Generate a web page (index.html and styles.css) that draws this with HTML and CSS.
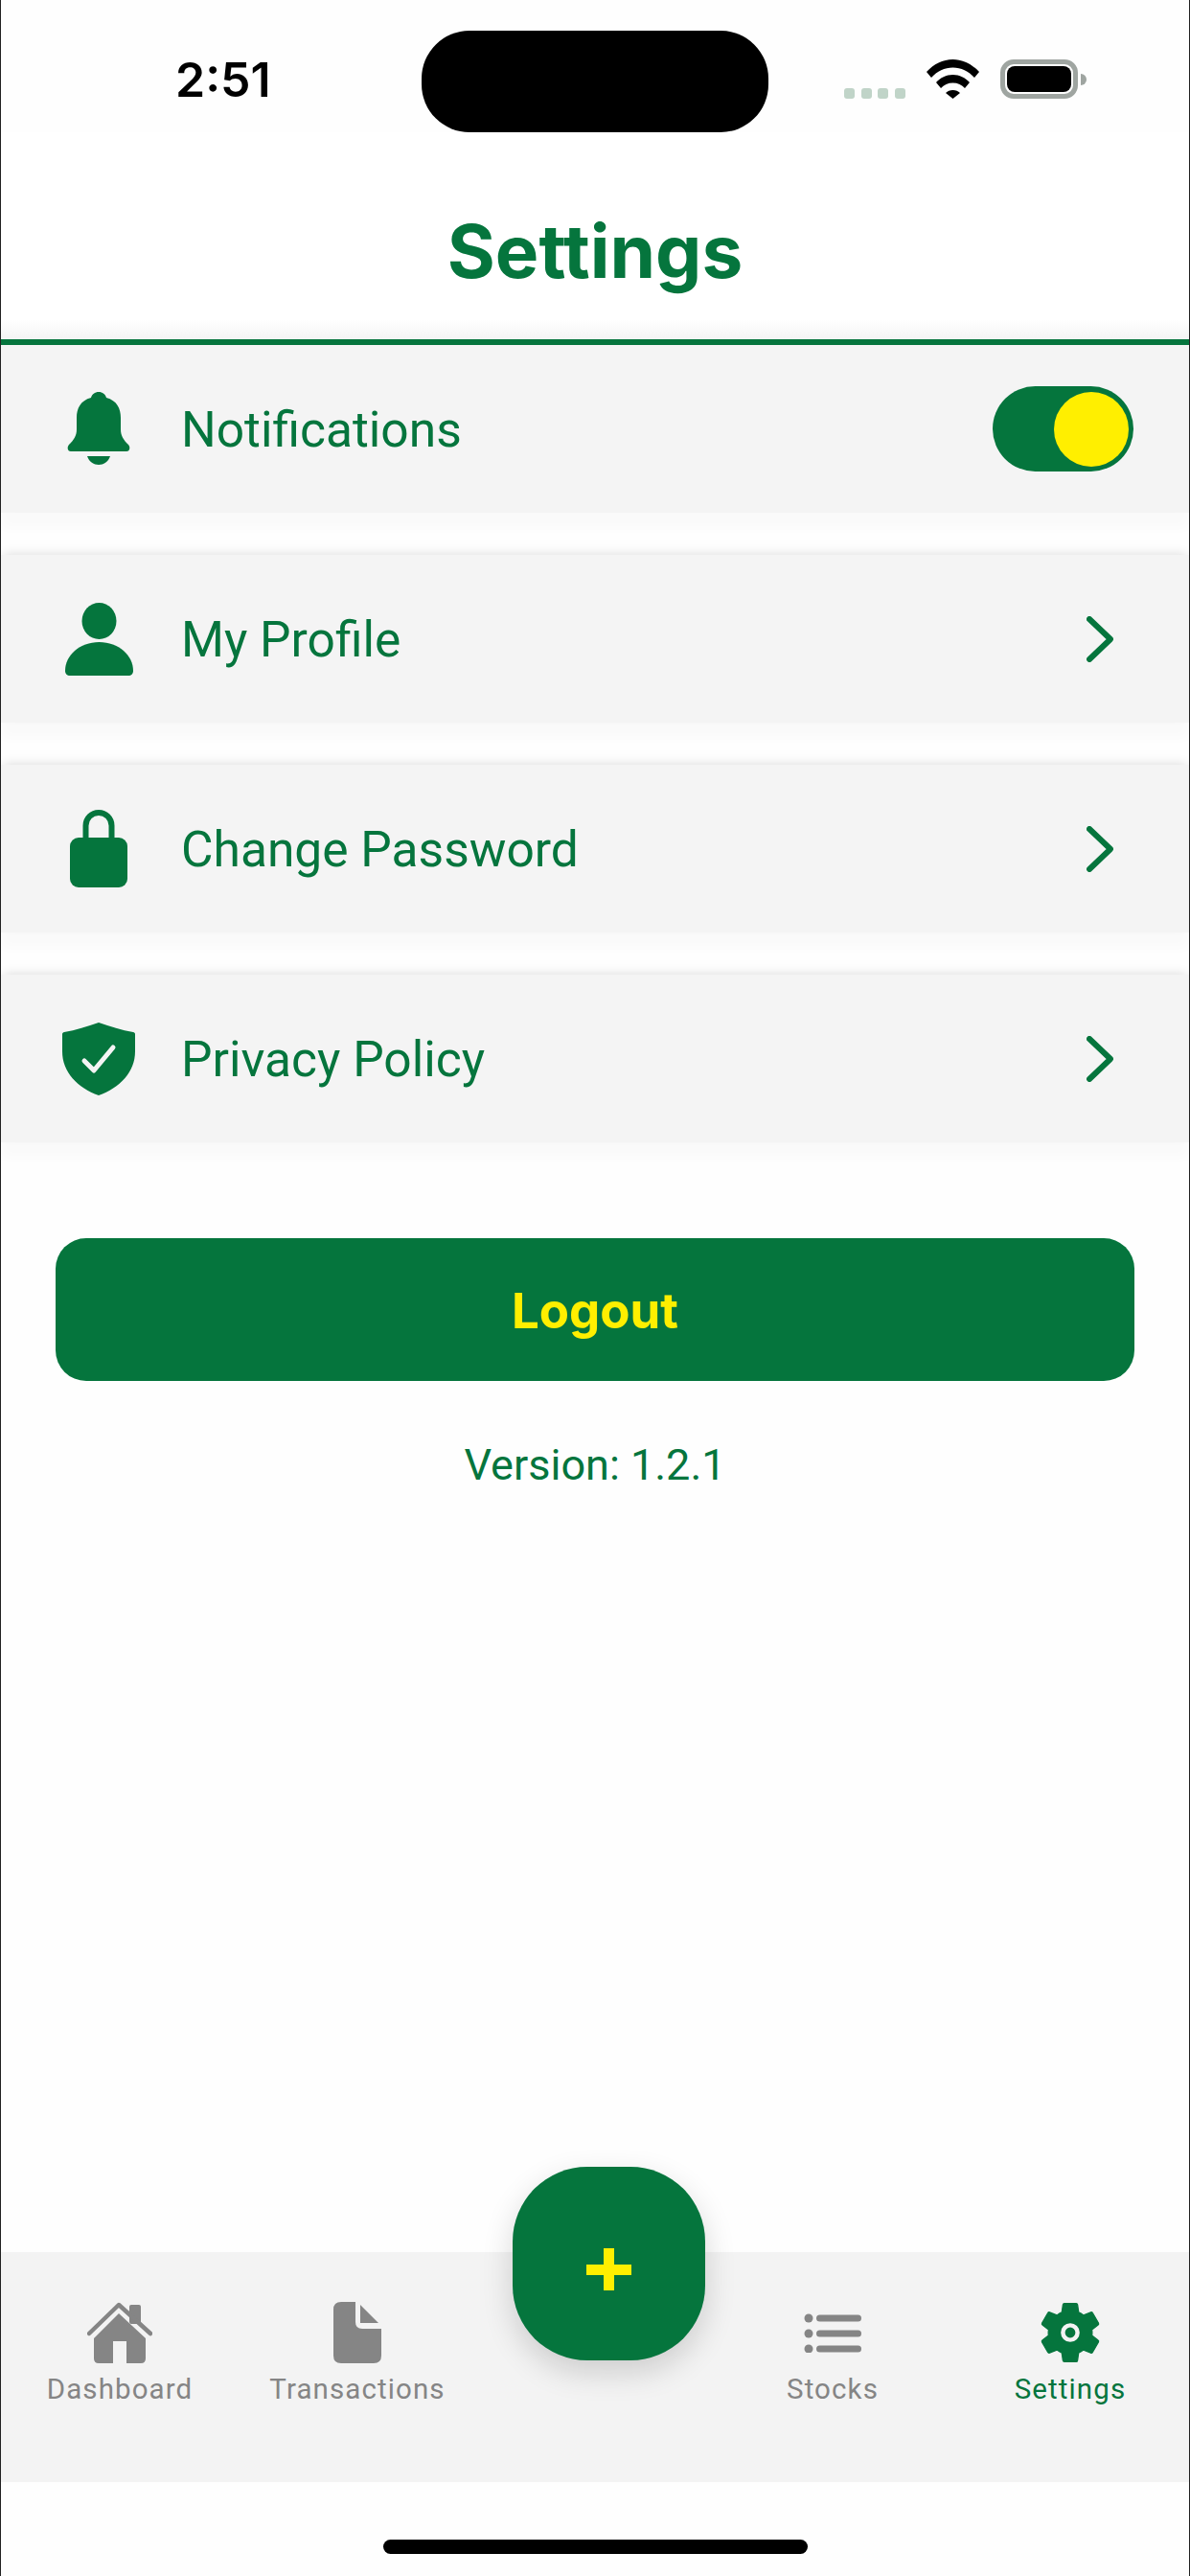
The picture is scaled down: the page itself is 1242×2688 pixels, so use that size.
FILE: index.html
```html
<!DOCTYPE html>
<html lang="en">
<head>
  <meta charset="UTF-8" />
  <meta name="viewport" content="width=device-width, initial-scale=1.0" />
  <title>Settings</title>
  <link rel="stylesheet" href="styles.css">
</head>
<body>
  <div class="phone">
    <div class="status-bar">
      <span class="time">2:51</span>
      <div class="island"></div>
      <div class="status-icons">
        <div class="signal"><i></i><i></i><i></i><i></i></div>
        <svg class="wifi" width="55" height="41" viewBox="0 0 55 41">
          <path d="M0 13C7.5 5 17 0 27.5 0S47.5 5 55 13L50 19C44 12.5 36 8.5 27.5 8.5S11 12.5 5 19z"/>
          <path d="M10 24C14.5 19 20.5 16 27.5 16S40.5 19 45 24L40 30C37 26.5 32.5 24.5 27.5 24.5S18 26.5 15 30z"/>
          <path d="M20 35C22 33 24.5 32 27.5 32S33 33 35 35L27.5 41z"/>
        </svg>
        <div class="battery"><div class="battery-level"></div></div>
        <div class="battery-cap"></div>
      </div>
    </div>

    <header class="page-header">
      <h1>Settings</h1>
    </header>

    <main class="main">
      <ul class="settings-list">
        <li class="settings-row">
          <span class="row-icon">
            <svg width="66" height="77" viewBox="0 0 66 77">
              <path d="M33 0c-4 0-7 2.500-8 6C14 9 10 17 10 27v12c0 7-3 11-8 16-2 2-2 7 2 7h58c4 0 4-5 2-7-5-5-8-9-8-16V27C56 17 52 9 41 6 40 2.500 37 0 33 0z"/>
              <path d="M21 67h24c-2 6-7 9-12 9s-10-3-12-9z"/>
            </svg>
          </span>
          <span class="row-label">Notifications</span>
          <span class="toggle"><span class="toggle-knob"></span></span>
        </li>
        <li class="settings-row">
          <span class="row-icon">
            <svg width="71" height="76" viewBox="0 0 71 76">
              <ellipse cx="35.500" cy="19" rx="18" ry="19"/>
              <path d="M0 71C0 55 15 41 35.500 41S71 55 71 71c0 3-2 5-5 5H5c-3 0-5-2-5-5z"/>
            </svg>
          </span>
          <span class="row-label">My Profile</span>
          <svg class="chevron" width="28" height="48" viewBox="0 0 28 48"><path d="M3 3L25 24 3 45"/></svg>
        </li>
        <li class="settings-row">
          <span class="row-icon">
            <svg width="60" height="81" viewBox="0 0 60 81">
              <path class="shackle" d="M16.500 32V16.500a13.500 13.500 0 0 1 27 0V32"/>
              <rect y="29" width="60" height="52" rx="9"/>
            </svg>
          </span>
          <span class="row-label">Change Password</span>
          <svg class="chevron" width="28" height="48" viewBox="0 0 28 48"><path d="M3 3L25 24 3 45"/></svg>
        </li>
        <li class="settings-row">
          <span class="row-icon">
            <svg width="76" height="76" viewBox="0 0 76 76">
              <path d="M38 0c12 4 24 8 36 10 1 0 2 1 2 2v18c0 22-16 38-38 46C16 68 0 52 0 30V12c0-1 1-2 2-2C14 8 26 4 38 0z"/>
              <path class="check" d="M23 40L33 50 53 26"/>
            </svg>
          </span>
          <span class="row-label">Privacy Policy</span>
          <svg class="chevron" width="28" height="48" viewBox="0 0 28 48"><path d="M3 3L25 24 3 45"/></svg>
        </li>
      </ul>

      <button class="logout-btn">Logout</button>
      <p class="version">Version: 1.2.1</p>
    </main>

    <nav class="tab-bar">
      <a class="tab" href="#">
        <span class="tab-icon">
          <svg width="68" height="64" viewBox="0 0 68 64">
            <rect x="44" y="3" width="12" height="20" rx="2"/>
            <path class="roof" d="M2 33L33 3 66 33"/>
            <path d="M33 12L61 38V59q0 5-5 5H41V41H27V64H12q-5 0-5-5V38z"/>
          </svg>
        </span>
        Dashboard
      </a>
      <a class="tab" href="#">
        <span class="tab-icon">
          <svg width="50" height="64" viewBox="0 0 50 64">
            <path d="M8 0H23V21q0 7 7 7H50V56q0 8-8 8H8q-8 0-8-8V8q0-8 8-8z"/>
            <path d="M28 3L47 22H28z"/>
          </svg>
        </span>
        Transactions
      </a>
      <div class="tab-spacer"></div>
      <a class="tab" href="#">
        <span class="tab-icon">
          <svg width="60" height="41" viewBox="0 0 60 41">
            <ellipse cx="5" cy="5" rx="4.500" ry="4.500"/>
            <ellipse cx="5" cy="21" rx="4.500" ry="4.500"/>
            <ellipse cx="5" cy="37" rx="4.500" ry="4.500"/>
            <rect x="13" y="1.500" width="47" height="7" rx="3.500"/>
            <rect x="13" y="17.500" width="47" height="7" rx="3.500"/>
            <rect x="13" y="33.500" width="47" height="7" rx="3.500"/>
          </svg>
        </span>
        Stocks
      </a>
      <a class="tab active" href="#">
        <span class="tab-icon">
          <svg width="64" height="66" viewBox="2.300 1.600 19.400 20.800">
            <path class="gear" d="M19.140 12.940c.04-.3.06-.61.06-.94 0-.32-.02-.64-.07-.94l2.030-1.580c.18-.14.23-.41.12-.61l-1.920-3.320c-.12-.22-.37-.29-.59-.22l-2.390.96c-.5-.38-1.030-.7-1.620-.94l-.36-2.540c-.04-.24-.24-.41-.48-.41h-3.840c-.24 0-.43.17-.47.41l-.36 2.540c-.59.24-1.130.57-1.620.94l-2.390-.96c-.22-.08-.47 0-.59.22L2.740 8.870c-.12.21-.08.47.12.61l2.030 1.580c-.05.3-.09.63-.09.94s.02.64.07.94l-2.030 1.580c-.18.14-.23.41-.12.61l1.920 3.320c.12.22.37.29.59.22l2.390-.96c.5.38 1.030.7 1.620.94l.36 2.540c.05.24.24.41.48.41h3.840c.24 0 .44-.17.47-.41l.36-2.540c.59-.24 1.130-.56 1.620-.94l2.390.96c.22.08.47 0 .59-.22l1.920-3.320c.12-.22.07-.47-.12-.61l-2.010-1.580z"/>
            <circle class="gear-hole" cx="12" cy="12" r="2.400"/>
          </svg>
        </span>
        Settings
      </a>
    </nav>

    <div class="home-area"><div class="home-indicator"></div></div>

    <button class="fab">
      <svg width="47" height="44" viewBox="0 0 47 44">
        <rect x="18" width="11" height="44"/>
        <rect y="17" width="47" height="11"/>
      </svg>
    </button>
  </div>
</body>
</html>
```

FILE: styles.css
```css
* {
  margin: 0;
  padding: 0;
  box-sizing: border-box;
}

html, body {
  background: #fefefe;
}

.phone {
  position: relative;
  display: flex;
  flex-direction: column;
  width: 1242px;
  height: 2688px;
  overflow: hidden;
  border-left: 1px solid #222;
  border-right: 1px solid #222;
  font-family: Roboto, "Liberation Sans", sans-serif;
  color: #05753d;
}

/* status bar */
.status-bar {
  display: grid;
  grid-template-columns: 439px 362px 1fr;
  height: 138px;
  padding-top: 32px;
}

.time {
  padding-left: 182px;
  padding-top: 21px;
  font-family: Inter, "Liberation Sans", sans-serif;
  font-size: 50px;
  line-height: 60px;
  font-weight: 600;
  color: #000;
}

.island {
  height: 106px;
  background: #000;
  border-radius: 50px;
}

.status-icons {
  display: flex;
  align-items: flex-end;
  height: 71px;
  padding-left: 79px;
}

.signal {
  display: flex;
  gap: 6.5px;
  margin-right: 22px;
}

.signal i {
  width: 11px;
  height: 11px;
  border-radius: 3px;
  background: #c0d4c8;
}

.wifi {
  margin-right: 22px;
  fill: #000;
}

.battery {
  width: 81px;
  height: 41px;
  padding: 2px;
  border: 5px solid #9fa5a1;
  border-radius: 14px;
}

.battery-level {
  height: 100%;
  background: #000;
  border-radius: 8px;
}

.battery-cap {
  width: 6px;
  height: 12px;
  margin: 0 0 14px 3px;
  background: #9fa5a1;
  border-radius: 0 6px 6px 0;
}

/* header */
.page-header {
  height: 222px;
  padding-top: 82px;
  text-align: center;
  border-bottom: 6px solid #05753d;
  background: linear-gradient(to bottom, #fff calc(100% - 20px), #f4f4f4 100%);
}

.page-header h1 {
  font-family: Inter, "Liberation Sans", sans-serif;
  font-size: 76.5px;
  line-height: 84px;
  font-weight: 700;
}

/* settings rows */
.main {
  flex: 1;
  display: flex;
  flex-direction: column;
  align-items: center;
}

.settings-list {
  list-style: none;
  width: 100%;
  display: flex;
  flex-direction: column;
  gap: 44px;
}

.settings-row {
  display: flex;
  align-items: center;
  height: 175px;
  padding: 0 58px 0 62px;
  background: #f4f4f4;
  box-shadow: 0 -4px 10px -3px rgba(0, 0, 0, 0.13), 0 16px 12px rgba(0, 0, 0, 0.018);
}

.settings-row:first-child {
  box-shadow: 0 16px 12px rgba(0, 0, 0, 0.018);
}

.row-icon {
  display: flex;
  justify-content: center;
  width: 80px;
  margin-right: 46px;
}

.row-icon svg {
  fill: #05753d;
}

.shackle {
  fill: none;
  stroke: #05753d;
  stroke-width: 6;
}

.check {
  fill: none;
  stroke: #f4f4f4;
  stroke-width: 5;
  stroke-linecap: round;
  stroke-linejoin: round;
}

.row-label {
  flex: 1;
  padding-top: 2px;
  font-size: 51.5px;
  line-height: 62px;
}

.chevron {
  margin-right: 21px;
  fill: none;
  stroke: #05753d;
  stroke-width: 6;
  stroke-linecap: round;
  stroke-linejoin: round;
}

.toggle {
  display: flex;
  justify-content: flex-end;
  align-items: center;
  width: 147px;
  height: 89px;
  padding-right: 5px;
  background: #05753d;
  border-radius: 45px;
}

.toggle-knob {
  width: 78px;
  height: 78px;
  background: #ffef00;
  border-radius: 50%;
}

/* logout */
.logout-btn {
  width: 1126px;
  height: 149px;
  margin-top: 100px;
  padding-top: 2px;
  border: none;
  border-radius: 32px;
  background: #05753d;
  color: #ffef00;
  font-family: Inter, "Liberation Sans", sans-serif;
  font-size: 51px;
  font-weight: 700;
}

.version {
  margin-top: 58px;
  font-size: 45px;
  line-height: 60px;
}

/* tab bar */
.tab-bar {
  display: grid;
  grid-template-columns: repeat(5, 1fr);
  height: 240px;
  padding-top: 51px;
  background: #f3f3f3;
}

.tab {
  display: flex;
  flex-direction: column;
  align-items: center;
  gap: 8px;
  color: #858585;
  text-decoration: none;
  font-size: 29.5px;
  line-height: 36px;
  letter-spacing: 1.1px;
}

.tab-icon {
  display: flex;
  align-items: center;
  justify-content: center;
  height: 66px;
}

.tab-icon svg {
  fill: #858585;
}

.roof {
  fill: none;
  stroke: #858585;
  stroke-width: 4.500;
  stroke-linecap: round;
  stroke-linejoin: round;
}

.tab.active {
  color: #05753d;
}

.tab.active .tab-icon svg {
  fill: #05753d;
}

.gear {
  stroke: #05753d;
  stroke-width: 0.4;
  stroke-linejoin: round;
}

.gear-hole {
  fill: #05753d;
  stroke: #f3f3f3;
  stroke-width: 1.400;
}

/* home indicator */
.home-area {
  height: 98px;
  padding-top: 60px;
  display: flex;
  justify-content: center;
}

.home-indicator {
  width: 443px;
  height: 15px;
  background: #000;
  border-radius: 8px;
}

/* floating add button */
.fab {
  position: absolute;
  left: 534px;
  top: 2261px;
  display: flex;
  align-items: center;
  justify-content: center;
  width: 201px;
  height: 202px;
  padding-top: 12px;
  border: none;
  border-radius: 78px;
  background: #05753d;
  box-shadow: 0 12px 32px rgba(0, 0, 0, 0.16);
}

.fab svg {
  fill: #ffef00;
}
```
